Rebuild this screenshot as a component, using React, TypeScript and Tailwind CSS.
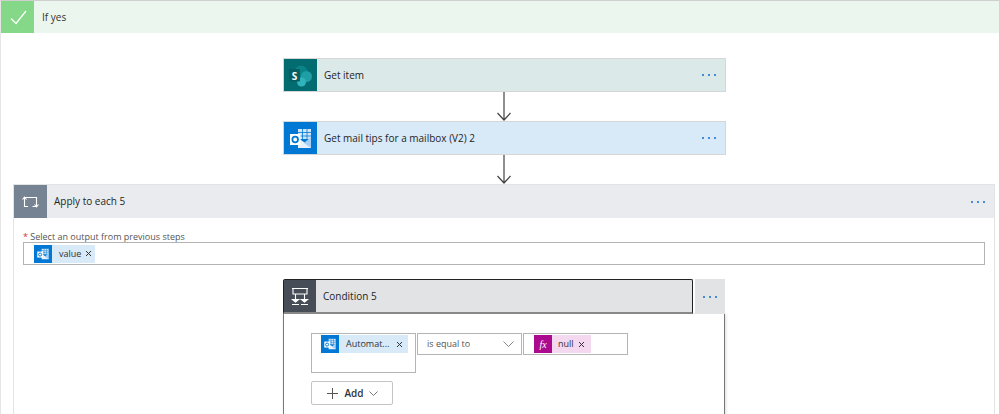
const font = "font-['Open_Sans','Noto_Sans',sans-serif]";

function SharePointIcon() {
  return (
    <svg width="33" height="33" viewBox="0 0 33 33">
      <circle cx="17" cy="13" r="6.5" fill="#0b8488" />
      <circle cx="22.5" cy="17.5" r="5.5" fill="#1f9ea3" />
      <circle cx="17.5" cy="23" r="4.5" fill="#30b4bb" />
      <rect x="5" y="10" width="11" height="12.5" rx="1" fill="#045e62" />
      <text x="10.5" y="20.5" textAnchor="middle" fontSize="10" fontWeight="700" fill="#fff" fontFamily="'Open Sans', sans-serif">S</text>
    </svg>
  );
}

function OutlookIcon({ size = 33 }: { size?: number }) {
  return (
    <svg width={size} height={size} viewBox="0 0 33 33">
      <rect x="14" y="7" width="13" height="10" fill="#cfe4f7" />
      <path d="M14 10.5h13M14 14h13M18.5 7v10M23 7v10" stroke="#0078d4" strokeWidth="0.8" />
      <path d="M14 16l13 9v1H14z" fill="#e6f1fb" />
      <path d="M27 15v11l-7-5z" fill="#a9d0f2" />
      <rect x="6" y="12" width="10.5" height="11" fill="#fff" />
      <circle cx="11.2" cy="17.5" r="2.8" fill="none" stroke="#0078d4" strokeWidth="1.8" />
    </svg>
  );
}

function Check() {
  return (
    <svg width="33" height="33" viewBox="0 0 33 33" fill="none">
      <path d="M10 17.5l5 5 10-12.5" stroke="#fff" strokeWidth="1.3" />
    </svg>
  );
}

function LoopIcon() {
  return (
    <svg width="33" height="33" viewBox="0 0 33 33" fill="none" stroke="#fff" strokeWidth="1.1">
      <path d="M14 21.5h-3.5v-9h12v9h-4" />
      <path d="M8.5 14.5l2-2.3 2 2.3" />
      <path d="M20.5 19.5l2 2.3 2-2.3" />
    </svg>
  );
}

function ConditionIcon() {
  return (
    <svg width="32" height="33" viewBox="0 0 32 33" fill="none" stroke="#fff" strokeWidth="1.1">
      <path d="M8 8.5h16M9 8.5v5.5h14v-5.5M11.5 14v5M20.5 14v5" />
      <path d="M8.5 19.5l3 2.5 3-2.5zM17.5 19.5l3 2.5 3-2.5z" fill="#fff" />
      <path d="M8 24.5h7M17 24.5h7" />
    </svg>
  );
}

function Arrow({ h }: { h: number }) {
  return (
    <svg width="16" height={h} viewBox={`0 0 16 ${h}`} fill="none" stroke="#444" strokeWidth="1.2" className="ml-[213px]">
      <path d={`M8 0v${h - 1}M1.5 ${h - 8}L8 ${h - 1}l6.5-7`} />
    </svg>
  );
}

function Dots() {
  return (
    <div className="flex gap-[4px]">
      <span className="w-[2px] h-[2px] rounded-full bg-[#0f6cd0]" />
      <span className="w-[2px] h-[2px] rounded-full bg-[#0f6cd0]" />
      <span className="w-[2px] h-[2px] rounded-full bg-[#0f6cd0]" />
    </div>
  );
}

function Close() {
  return (
    <svg width="7" height="7" viewBox="0 0 7 7" stroke="#333" strokeWidth="1">
      <path d="M1 1l5 5M6 1L1 6" />
    </svg>
  );
}

function Card({ title, iconBg, bg, children }: { title: string; iconBg: string; bg: string; children: React.ReactNode }) {
  return (
    <div className={`w-[443px] h-[34px] flex border border-[#d4d6d8] ${bg}`}>
      <div className={`w-[33px] shrink-0 flex items-center justify-center ${iconBg}`}>{children}</div>
      <div className="flex-1 pl-[7px] flex items-center text-[10px] text-[#252525]">{title}</div>
      <div className="pr-[9px] flex items-center"><Dots /></div>
    </div>
  );
}

export default function App() {
  return (
    <div className={`w-[999px] h-[414px] overflow-hidden bg-white border-t border-l border-t-[#cfcfcf] border-l-[#e6e6e6] ${font}`}>
      <div className="h-[32px] flex bg-[#ebf7ee]">
        <div className="w-[33px] bg-[#84d888] flex items-center justify-center"><Check /></div>
        <div className="pl-[8px] flex items-center text-[10px] text-[#333]">If yes</div>
      </div>

      <div className="flex flex-col pt-[25px]">
        <div className="ml-[282px]">
          <Card title="Get item" iconBg="bg-[#036c70]" bg="bg-[#dce9e9]"><SharePointIcon /></Card>
          <Arrow h={29} />
          <Card title="Get mail tips for a mailbox (V2) 2" iconBg="bg-[#0078d4]" bg="bg-[#d8e9f8]"><OutlookIcon /></Card>
          <Arrow h={29} />
        </div>

        <div className="ml-[12px] w-[982px] h-[300px] border border-[#e2e3e5]">
          <div className="h-[33px] flex bg-[#e9ebee]">
            <div className="w-[33px] bg-[#768393] flex items-center justify-center"><LoopIcon /></div>
            <div className="flex-1 pl-[7px] flex items-center text-[10px] text-[#252525]">Apply to each 5</div>
            <div className="pr-[9px] flex items-center"><Dots /></div>
          </div>

          <div className="pl-[9px] pr-[9px] pt-[14px]">
            <div className="text-[9px] leading-[10px] text-[#555]"><span className="text-[#d13438]">*</span> Select an output from previous steps</div>
            <div className="h-[23px] border border-[#b3b3b3] pl-[10px] flex items-center">
              <div className="h-[18px] flex items-center bg-[#d8e9f8]">
                <div className="w-[18px] h-[18px] bg-[#0078d4] flex items-center justify-center"><OutlookIcon size={18} /></div>
                <span className="pl-[7px] pr-[4px] text-[9px] text-[#333]">value</span>
                <span className="pr-[3px]"><Close /></span>
              </div>
            </div>
          </div>

          <div className="ml-[269px] mt-[14px] w-[442px]">
            <div className="flex h-[35px]">
              <div className="w-[410px] flex bg-[#e2e3e5] border border-[#222] border-b-2 border-b-[#888] rounded-t-[2px]">
                <div className="w-[32px] bg-[#464d57] flex items-center justify-center"><ConditionIcon /></div>
                <div className="flex-1 pl-[7px] flex items-center text-[10px] text-[#252525]">Condition 5</div>
              </div>
              <div className="flex-1 ml-[2px] bg-[#e2e3e5] flex items-center justify-center"><Dots /></div>
            </div>

            <div className="h-[110px] border-x border-x-[#777] pl-[27px] pt-[19px] shadow-[1px_0_3px_#ddd]">
              <div className="flex items-start">
                <div className="w-[105px] h-[40px] border border-[#b5b5b5] pl-[9px] pt-[1px]">
                  <div className="w-[87px] h-[18px] flex items-center bg-[#d8e9f8]">
                    <div className="w-[18px] h-[18px] bg-[#0078d4] flex items-center justify-center"><OutlookIcon size={18} /></div>
                    <span className="pl-[7px] flex-1 text-[9px] text-[#333]">Automat...</span>
                    <span className="pr-[5px]"><Close /></span>
                  </div>
                </div>
                <div className="ml-[1px] w-[105px] h-[22px] border border-[#b5b5b5] flex items-center justify-between pl-[9px] pr-[7px] text-[9px] text-[#555]">
                  is equal to
                  <svg width="11" height="6" viewBox="0 0 11 6" fill="none" stroke="#888"><path d="M.5.5l5 5 5-5" /></svg>
                </div>
                <div className="ml-[1px] w-[105px] h-[22px] border border-[#b5b5b5] pl-[10px] flex items-center">
                  <div className="h-[18px] flex items-center bg-[#f3d8ef]">
                    <div className="w-[18px] h-[18px] bg-[#ab0a8f] text-white font-['Liberation_Serif',serif] italic text-[10px] flex items-center justify-center">fx</div>
                    <span className="pl-[6px] pr-[4px] text-[9px] text-[#333]">null</span>
                    <span className="pr-[6px]"><Close /></span>
                  </div>
                </div>
              </div>
              <div className="mt-[8px] w-[82px] h-[24px] border border-[#c4c4c4] rounded-[2px] flex items-center justify-center gap-[5px] text-[10px] font-semibold text-[#333]">
                <svg width="13" height="13" viewBox="0 0 13 13" stroke="#555"><path d="M6.5 1v11M1 6.5h11" /></svg>
                Add
                <svg width="9" height="5" viewBox="0 0 9 5" fill="none" stroke="#777"><path d="M.5.5l4 4 4-4" /></svg>
              </div>
            </div>
          </div>
        </div>
      </div>
    </div>
  );
}
